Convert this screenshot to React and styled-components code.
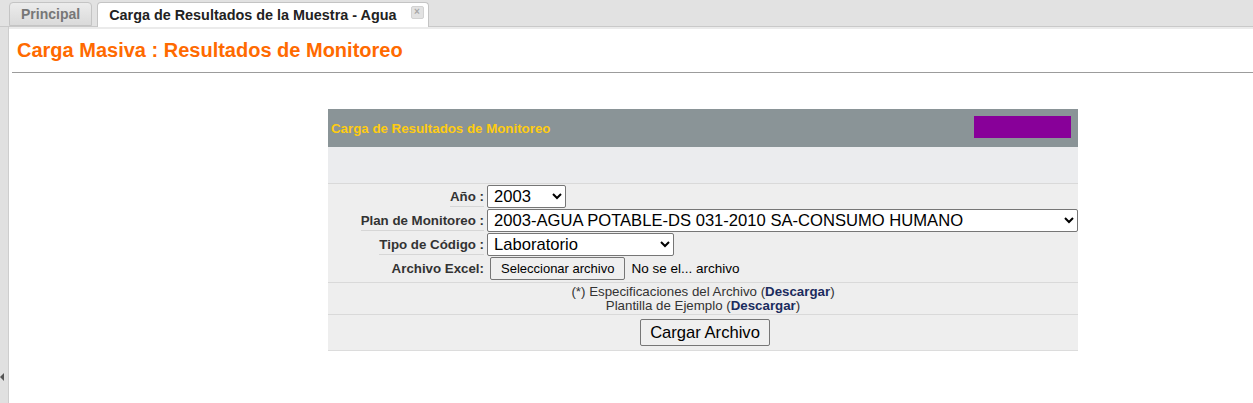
import React, { useState } from "react";
import styled, { createGlobalStyle } from "styled-components";

const GlobalStyle = createGlobalStyle`
  html, body {
    margin: 0;
    padding: 0;
    background: #ffffff;
    font-family: "Liberation Sans", Arial, sans-serif;
  }
  #root {
    height: 403px;
    overflow: hidden;
  }
`;

const Page = styled.div`
  display: flex;
  flex-direction: column;
  height: 403px;
`;

const TabBar = styled.div`
  display: flex;
  align-items: flex-end;
  gap: 5px;
  height: 27px;
  padding-left: 9px;
  background: #e2e2e2;
  border-bottom: 1px solid #c9c9c9;
  box-sizing: border-box;
`;

const Tab = styled.div`
  display: flex;
  align-items: center;
  gap: 14px;
  height: ${(p) => (p.active ? "25px" : "24px")};
  margin-bottom: ${(p) => (p.active ? "-1px" : "0")};
  padding: 0 ${(p) => (p.active ? "4px" : "11px")} 0 11px;
  box-sizing: border-box;
  border: 1px solid #c4c4c4;
  border-bottom: ${(p) => (p.active ? "none" : "1px solid #c4c4c4")};
  border-radius: 4px 4px 0 0;
  background: ${(p) => (p.active ? "#ffffff" : "linear-gradient(#ececec, #dadada)")};
  color: ${(p) => (p.active ? "#222222" : "#777777")};
  font-size: ${(p) => (p.active ? "14.4px" : "14px")};
  font-weight: bold;
`;

const CloseIcon = styled.span`
  display: inline-flex;
  align-items: center;
  justify-content: center;
  width: 11px;
  height: 11px;
  margin-top: -6px;
  border-radius: 2px;
  background: #e2e2e2;
  border: 1px solid #d2d2d2;
  color: #a8a8a8;
  font-size: 10px;
  line-height: 1;
`;

const Body = styled.div`
  flex: 1;
  display: flex;
`;

const Gutter = styled.div`
  position: relative;
  width: 8px;
  background: #e0e0e0;
  border-right: 1px solid #cdcdcd;
`;

const GutterArrow = styled.span`
  position: absolute;
  left: 0;
  top: 346px;
  width: 0;
  height: 0;
  border-top: 4px solid transparent;
  border-bottom: 4px solid transparent;
  border-right: 4px solid #555555;
`;

const Content = styled.div`
  flex: 1;
  padding-top: 2px;
  background: #ebebeb;
`;

const Panel = styled.div`
  height: 100%;
  background: #ffffff;
  padding: 9px 0 0 3px;
  box-sizing: border-box;
`;

const Title = styled.h1`
  margin: 0 0 0 5px;
  color: #ff6a00;
  font-size: 20px;
  font-weight: bold;
  line-height: 24px;
  padding-bottom: 10px;
`;

const Rule = styled.div`
  border-top: 1px solid #9c9c9c;
`;

const FormBox = styled.div`
  width: 750px;
  margin: 36px 0 0 316px;
  background: #eeeeee;
  border-bottom: 1px solid #dcdcdc;
`;

const FormHeader = styled.div`
  display: flex;
  align-items: center;
  justify-content: space-between;
  height: 38px;
  padding: 0 7px 0 3px;
  background: #8a9497;
`;

const HeaderTitle = styled.span`
  color: #ffcc11;
  font-size: 13.3px;
  font-weight: bold;
`;

const HeaderBadge = styled.span`
  width: 97px;
  height: 22px;
  margin-top: -3px;
  background: #880099;
`;

const Spacer = styled.div`
  height: 36px;
  background: #ebecee;
  border-bottom: 1px solid #d9d9d9;
`;

const Fields = styled.div`
  display: grid;
  grid-template-columns: 156px 1fr;
  column-gap: 3px;
  row-gap: 1px;
  padding: 1px 0 2px;
  border-bottom: 1px solid #d9d9d9;
`;

const Label = styled.div`
  display: flex;
  justify-content: flex-end;
  align-items: center;
  height: 23px;
`;

const LabelText = styled.span`
  color: #333333;
  font-size: 13.3px;
  font-weight: bold;
  line-height: 19px;
  border-bottom: ${(p) => (p.plain ? "none" : "1px solid #d6d6d6")};
`;

const Field = styled.div`
  display: flex;
  align-items: center;
  height: 23px;
`;

const Select = styled.select`
  width: ${(p) => p.w}px;
  height: 23px;
  padding: 0 2px;
  font-family: "Liberation Sans", Arial, sans-serif;
  font-size: 16.6px;
  color: #000000;
  background: #ffffff;
  border: 1px solid #767676;
  border-radius: 2px;
`;

const FileButton = styled.button`
  height: 23px;
  margin-left: 3px;
  padding: 0 10px;
  font-family: "Liberation Sans", Arial, sans-serif;
  font-size: 13px;
  color: #000000;
  background: #efefef;
  border: 1px solid #767676;
  border-radius: 2px;
`;

const FileName = styled.span`
  margin-left: 6px;
  font-size: 13.5px;
  color: #000000;
`;

const Notes = styled.div`
  padding: 2px 0 1px;
  text-align: center;
  color: #333333;
  font-size: 13.3px;
  line-height: 14px;
  border-bottom: 1px solid #d9d9d9;
`;

const Link = styled.a`
  color: #1b2c5e;
  font-weight: bold;
  text-decoration: none;
`;

const Actions = styled.div`
  display: flex;
  justify-content: center;
  padding: 4px 0 4px 4px;
`;

const SubmitButton = styled.button`
  height: 27px;
  padding: 0 9px;
  font-family: "Liberation Sans", Arial, sans-serif;
  font-size: 16.6px;
  color: #000000;
  background: #efefef;
  border: 1px solid #767676;
  border-radius: 2px;
`;

export default function App() {
  const [anio, setAnio] = useState("2003");
  const [plan, setPlan] = useState("p1");
  const [tipo, setTipo] = useState("lab");

  return (
    <Page>
      <GlobalStyle />
      <TabBar>
        <Tab>Principal</Tab>
        <Tab active>
          Carga de Resultados de la Muestra - Agua
          <CloseIcon>×</CloseIcon>
        </Tab>
      </TabBar>
      <Body>
        <Gutter>
          <GutterArrow />
        </Gutter>
        <Content>
          <Panel>
            <Title>Carga Masiva : Resultados de Monitoreo</Title>
            <Rule />
            <FormBox>
              <FormHeader>
                <HeaderTitle>Carga de Resultados de Monitoreo</HeaderTitle>
                <HeaderBadge />
              </FormHeader>
              <Spacer />
              <Fields>
                <Label><LabelText>Año :</LabelText></Label>
                <Field>
                  <Select w={79} value={anio} onChange={(e) => setAnio(e.target.value)}>
                    <option value="2003">2003</option>
                    <option value="2004">2004</option>
                  </Select>
                </Field>
                <Label><LabelText>Plan de Monitoreo :</LabelText></Label>
                <Field>
                  <Select w={591} value={plan} onChange={(e) => setPlan(e.target.value)}>
                    <option value="p1">2003-AGUA POTABLE-DS 031-2010 SA-CONSUMO HUMANO</option>
                  </Select>
                </Field>
                <Label><LabelText>Tipo de Código :</LabelText></Label>
                <Field>
                  <Select w={187} value={tipo} onChange={(e) => setTipo(e.target.value)}>
                    <option value="lab">Laboratorio</option>
                    <option value="int">Interno</option>
                  </Select>
                </Field>
                <Label><LabelText plain>Archivo Excel:</LabelText></Label>
                <Field>
                  <FileButton type="button">Seleccionar archivo</FileButton>
                  <FileName>No se el... archivo</FileName>
                </Field>
              </Fields>
              <Notes>
                <div>(*) Especificaciones del Archivo (<Link href="#">Descargar</Link>)</div>
                <div>Plantilla de Ejemplo (<Link href="#">Descargar</Link>)</div>
              </Notes>
              <Actions>
                <SubmitButton type="button">Cargar Archivo</SubmitButton>
              </Actions>
            </FormBox>
          </Panel>
        </Content>
      </Body>
    </Page>
  );
}
